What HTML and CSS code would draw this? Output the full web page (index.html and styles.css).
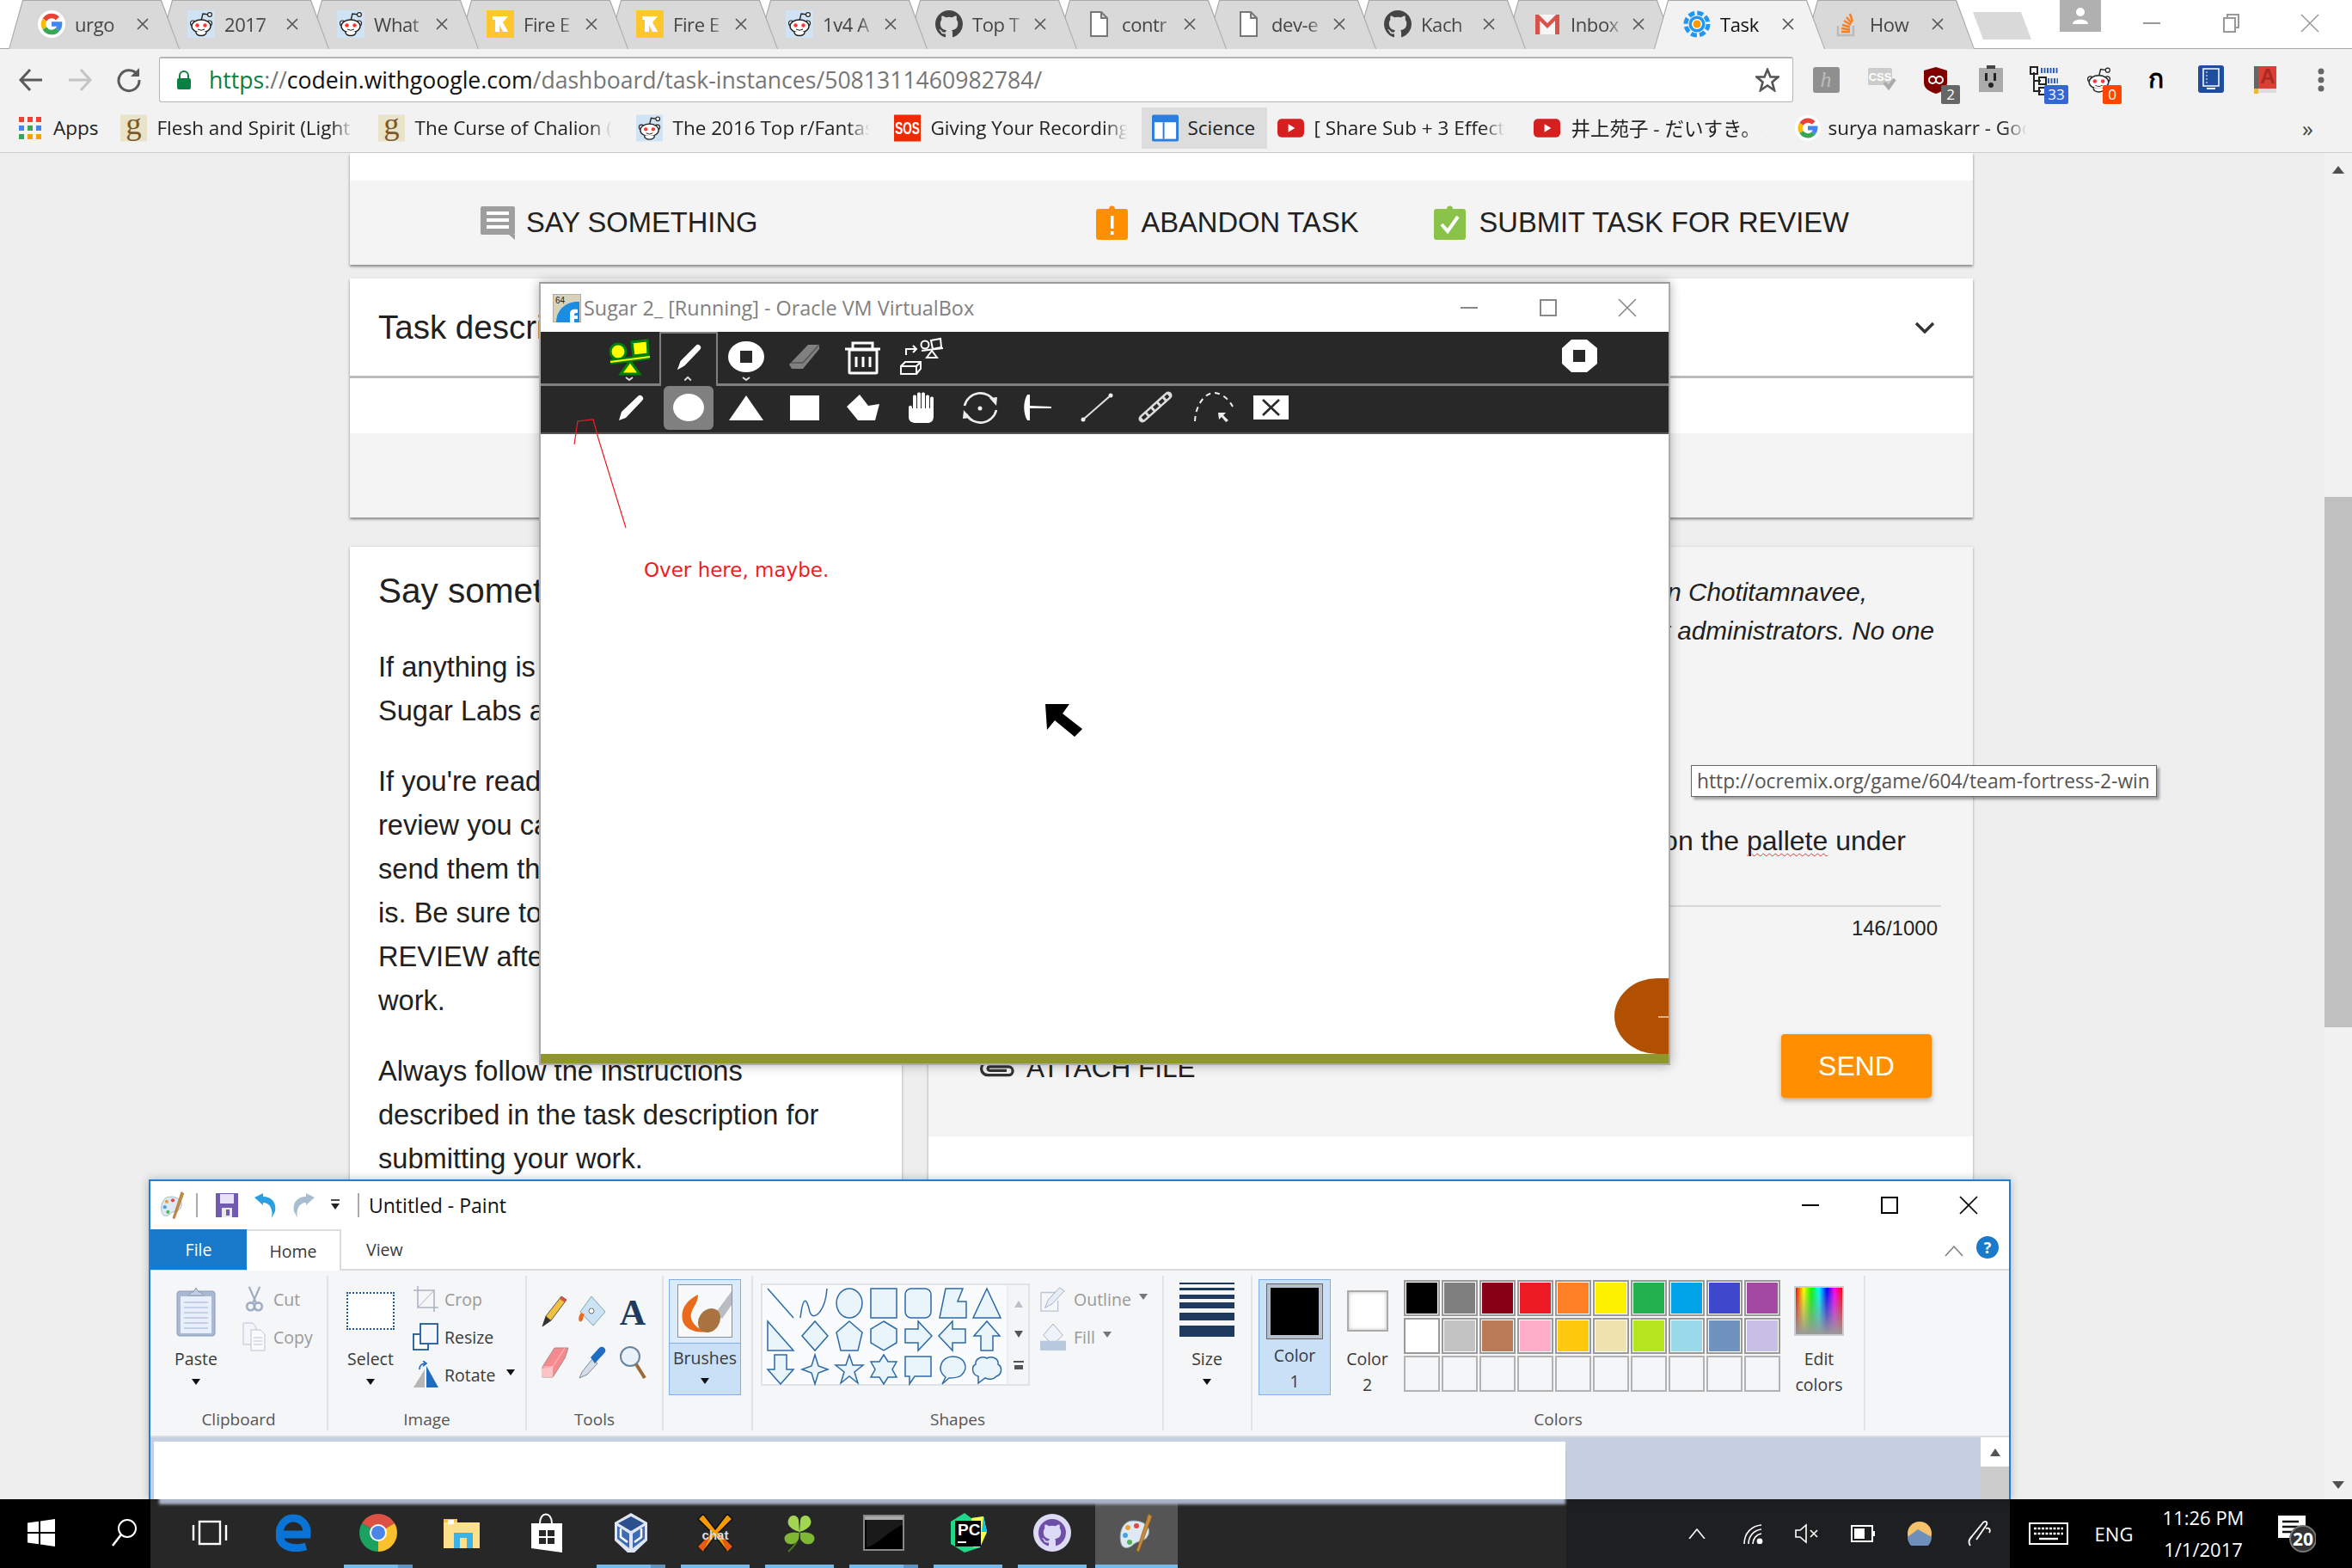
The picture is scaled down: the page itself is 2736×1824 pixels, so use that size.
FILE: index.html
```html
<!DOCTYPE html>
<html lang="en">
<head>
<meta charset="utf-8">
<title>Task - Google Code-in</title>
<link rel="stylesheet" href="styles.css">
</head>
<body>
<svg class="defs" width="0" height="0">
  <symbol id="i-g" viewBox="0 0 32 32">
    <circle cx="16" cy="16" r="16" fill="#fff"/>
    <g fill="none" stroke-width="5.5">
      <path d="M8 11A9.5 9.5 0 0 1 23 9.5" stroke="#ea4335"/>
      <path d="M8 11A9.5 9.5 0 0 0 8 21" stroke="#fbbc05"/>
      <path d="M8 21A9.5 9.5 0 0 0 23 22.5" stroke="#34a853"/>
      <path d="M23 22.5A9.5 9.5 0 0 0 25.5 16H16" stroke="#4285f4"/>
    </g>
  </symbol>
  <symbol id="i-snoo" viewBox="0 0 32 32">
    <path d="M16 12L18 4L25 5" fill="none" stroke="#222" stroke-width="1.4"/>
    <circle cx="26" cy="5" r="2.4" fill="#fff" stroke="#222" stroke-width="1.2"/>
    <circle cx="6.5" cy="15" r="3" fill="#fff" stroke="#222" stroke-width="1.2"/>
    <circle cx="25.5" cy="15" r="3" fill="#fff" stroke="#222" stroke-width="1.2"/>
    <ellipse cx="16" cy="18.5" rx="11" ry="7.5" fill="#fff" stroke="#222" stroke-width="1.4"/>
    <path d="M10 25C9 31 23 31 22 25" fill="#fff" stroke="#222" stroke-width="1.4"/>
    <circle cx="11.5" cy="17.5" r="2.2" fill="#f33"/>
    <circle cx="20.5" cy="17.5" r="2.2" fill="#f33"/>
    <path d="M12 22Q16 24.5 20 22" fill="none" stroke="#222"/>
  </symbol>
  <symbol id="i-reddit" viewBox="0 0 32 32">
    <rect width="32" height="32" fill="#cfe3f5"/>
    <use href="#i-snoo" width="32" height="32"/>
  </symbol>
  <symbol id="i-k" viewBox="0 0 32 32">
    <rect width="32" height="32" fill="#ffc72c"/>
    <path d="M7 7H25L19 14L25 25H19L15 17V25H10V11H7Z" fill="#fff"/>
  </symbol>
  <symbol id="i-gh" viewBox="0 0 16 16">
    <path fill="currentColor" d="M8 0C3.58 0 0 3.58 0 8c0 3.54 2.29 6.53 5.47 7.59.4.07.55-.17.55-.38 0-.19-.01-.82-.01-1.49-2.01.37-2.53-.49-2.69-.94-.09-.23-.48-.94-.82-1.13-.28-.15-.68-.52-.01-.53.63-.01 1.08.58 1.23.82.72 1.21 1.87.87 2.33.66.07-.52.28-.87.51-1.07-1.78-.2-3.64-.89-3.64-3.95 0-.87.31-1.59.82-2.15-.08-.2-.36-1.02.08-2.12 0 0 .67-.21 2.2.82.64-.18 1.32-.27 2-.27.68 0 1.36.09 2 .27 1.53-1.04 2.2-.82 2.2-.82.44 1.1.16 1.92.08 2.12.51.56.82 1.27.82 2.15 0 3.07-1.87 3.75-3.65 3.95.29.25.54.73.54 1.48 0 1.07-.01 1.93-.01 2.2 0 .21.15.46.55.38A8.013 8.013 0 0 0 16 8c0-4.42-3.58-8-8-8z"/>
  </symbol>
  <symbol id="i-doc" viewBox="0 0 32 32">
    <path d="M7 2H19L26 9V30H7Z M19 2V9H26" fill="#fff" stroke="#777" stroke-width="2"/>
  </symbol>
  <symbol id="i-gmail" viewBox="0 0 32 32">
    <rect x="2" y="5" width="28" height="23" fill="#f6f6f6"/>
    <path d="M2 28V5H6L16 15L26 5H30V28H25V12L16 21L7 12V28Z" fill="#d9534a"/>
  </symbol>
  <symbol id="i-gear" viewBox="0 0 32 32">
    <circle cx="16" cy="16" r="13" fill="none" stroke="#2196f3" stroke-width="5" stroke-dasharray="7 3.2"/>
    <circle cx="16" cy="16" r="9.5" fill="#2196f3"/>
    <circle cx="16" cy="16" r="6" fill="#fff"/>
    <circle cx="16" cy="16" r="4.5" fill="#ff9800"/>
  </symbol>
  <symbol id="i-so" viewBox="0 0 32 32">
    <path d="M6 18V29H24V18" fill="none" stroke="#bbb" stroke-width="2.5"/>
    <path d="M10 25H20M10 21L20 22.5M11 17L20 19.5M13 12L21 17M16 8L22 15M20 4L23 13" fill="none" stroke="#f48024" stroke-width="2.5"/>
  </symbol>
  <symbol id="i-yt" viewBox="0 0 32 32">
    <rect y="5" width="32" height="22" rx="5" fill="#d6201f"/>
    <path d="M13 11L21 16L13 21Z" fill="#fff"/>
  </symbol>
  <symbol id="i-gb" viewBox="0 0 32 32">
    <rect width="32" height="32" fill="#e9e3c9"/>
    <text x="16" y="23" class="svg-g">g</text>
  </symbol>
  <symbol id="i-palette" viewBox="0 0 44 48">
    <path d="M18 10C6 10 1 24 4 36C6 44 14 42 18 38C24 32 32 36 36 26C39 16 30 10 18 10Z" fill="#dfe9f3" stroke="#8aa" stroke-width="1"/>
    <circle cx="12" cy="18" r="3" fill="#e8a33d"/>
    <circle cx="22" cy="16" r="3" fill="#e04848"/>
    <circle cx="9" cy="27" r="3" fill="#4aa3df"/>
    <circle cx="14" cy="35" r="3" fill="#57b05c"/>
    <path d="M36 2L40 5L25 46L22 45Z" fill="#c98a3c" stroke="#8a5a20" stroke-width=".7"/>
  </symbol>
</svg>

<div class="screen">
  <header class="chrome">
    <div class="tabstrip">
      <div class="tab"><svg class="fav"><use href="#i-g"/></svg><span class="tab-t">urgo</span><svg class="tab-x" viewBox="0 0 14 14"><path d="M1 1L13 13M13 1L1 13"/></svg></div>
      <div class="tab"><svg class="fav"><use href="#i-reddit"/></svg><span class="tab-t">2017</span><svg class="tab-x" viewBox="0 0 14 14"><path d="M1 1L13 13M13 1L1 13"/></svg></div>
      <div class="tab"><svg class="fav"><use href="#i-reddit"/></svg><span class="tab-t">What</span><svg class="tab-x" viewBox="0 0 14 14"><path d="M1 1L13 13M13 1L1 13"/></svg></div>
      <div class="tab"><svg class="fav"><use href="#i-k"/></svg><span class="tab-t">Fire E</span><svg class="tab-x" viewBox="0 0 14 14"><path d="M1 1L13 13M13 1L1 13"/></svg></div>
      <div class="tab"><svg class="fav"><use href="#i-k"/></svg><span class="tab-t">Fire E</span><svg class="tab-x" viewBox="0 0 14 14"><path d="M1 1L13 13M13 1L1 13"/></svg></div>
      <div class="tab"><svg class="fav"><use href="#i-reddit"/></svg><span class="tab-t">1v4 A</span><svg class="tab-x" viewBox="0 0 14 14"><path d="M1 1L13 13M13 1L1 13"/></svg></div>
      <div class="tab"><svg class="fav gh-dark"><use href="#i-gh"/></svg><span class="tab-t">Top T</span><svg class="tab-x" viewBox="0 0 14 14"><path d="M1 1L13 13M13 1L1 13"/></svg></div>
      <div class="tab"><svg class="fav"><use href="#i-doc"/></svg><span class="tab-t">contr</span><svg class="tab-x" viewBox="0 0 14 14"><path d="M1 1L13 13M13 1L1 13"/></svg></div>
      <div class="tab"><svg class="fav"><use href="#i-doc"/></svg><span class="tab-t">dev-e</span><svg class="tab-x" viewBox="0 0 14 14"><path d="M1 1L13 13M13 1L1 13"/></svg></div>
      <div class="tab"><svg class="fav gh-dark"><use href="#i-gh"/></svg><span class="tab-t">Kach</span><svg class="tab-x" viewBox="0 0 14 14"><path d="M1 1L13 13M13 1L1 13"/></svg></div>
      <div class="tab"><svg class="fav"><use href="#i-gmail"/></svg><span class="tab-t">Inbox</span><svg class="tab-x" viewBox="0 0 14 14"><path d="M1 1L13 13M13 1L1 13"/></svg></div>
      <div class="tab tab-on"><svg class="fav"><use href="#i-gear"/></svg><span class="tab-t">Task</span><svg class="tab-x" viewBox="0 0 14 14"><path d="M1 1L13 13M13 1L1 13"/></svg></div>
      <div class="tab"><svg class="fav"><use href="#i-so"/></svg><span class="tab-t">How</span><svg class="tab-x" viewBox="0 0 14 14"><path d="M1 1L13 13M13 1L1 13"/></svg></div>
      <div class="newtab"></div>
      <div class="profile"><svg width="20" height="22" viewBox="0 0 20 22"><circle cx="10" cy="6" r="5" fill="#fff"/><path d="M1 20C1 13 19 13 19 20Z" fill="#fff"/></svg></div>
      <div class="wctl"><svg width="22" height="22" viewBox="0 0 22 22"><path d="M1 11H21" stroke="#999" stroke-width="2"/></svg></div>
      <div class="wctl"><svg width="22" height="22" viewBox="0 0 22 22"><path d="M7 4V1H20V16H16M3 5H16V21H3Z" fill="none" stroke="#999" stroke-width="2"/></svg></div>
      <div class="wctl"><svg width="22" height="22" viewBox="0 0 22 22"><path d="M1 1L21 21M21 1L1 21" stroke="#999" stroke-width="1.5"/></svg></div>
    </div>
    <div class="toolbar">
      <div class="nav"><svg width="30" height="28" viewBox="0 0 30 28"><path d="M14 2L3 14L14 26M3 14H28" fill="none" stroke="#5a5a5a" stroke-width="3"/></svg></div>
      <div class="nav"><svg width="30" height="28" viewBox="0 0 30 28"><path d="M16 2L27 14L16 26M27 14H2" fill="none" stroke="#c4c4c4" stroke-width="3"/></svg></div>
      <div class="nav"><svg width="30" height="30" viewBox="0 0 30 30"><path d="M25 9A12 12 0 1 0 27 15" fill="none" stroke="#5a5a5a" stroke-width="3"/><path d="M27 1V11H17Z" fill="#5a5a5a"/></svg></div>
      <div class="omni">
        <svg class="lock" width="18" height="22" viewBox="0 0 18 22"><path d="M4 9V6A5 5 0 0 1 14 6V9" fill="none" stroke="#0b8043" stroke-width="2"/><rect x="1" y="9" width="16" height="13" rx="2" fill="#0b8043"/></svg>
        <span class="url"><span class="u-sec">https</span><span class="u-rest">://</span><span class="u-host">codein.withgoogle.com</span><span class="u-rest">/dashboard/task-instances/5081311460982784/</span></span>
        <svg class="star" width="28" height="28" viewBox="0 0 28 28"><path d="M14 2L17.5 10.5H26.5L19.5 16.5L22 26L14 20.5L6 26L8.5 16.5L1.5 10.5H10.5Z" fill="none" stroke="#555" stroke-width="2.6"/></svg>
      </div>
      <div class="ext"><svg viewBox="0 0 64 52"><rect x="17" y="12" width="31" height="30" rx="3" fill="#8f8f8f"/><text x="32" y="35" class="svg-h">h</text></svg></div>
      <div class="ext"><svg viewBox="0 0 64 52"><rect x="17" y="13" width="28" height="20" rx="2" fill="#ccc"/><text x="31" y="28" class="svg-css">CSS</text><path d="M36 30L41 36L48 26" fill="none" stroke="#aaa" stroke-width="4"/></svg></div>
      <div class="ext"><svg viewBox="0 0 64 52"><path d="M18 16L32 12L45 16V30C45 38 38 41 32 43C26 41 18 38 18 30Z" fill="#800000"/><circle cx="28" cy="27" r="4" fill="none" stroke="#fff" stroke-width="2"/><circle cx="36" cy="27" r="4" fill="none" stroke="#fff" stroke-width="2"/><rect x="38" y="33" width="22" height="22" rx="2" fill="#666"/><text x="49" y="50" class="svg-badge">2</text></svg></div>
      <div class="ext"><svg viewBox="0 0 64 52"><rect x="18" y="13" width="28" height="28" fill="#aaa"/><rect x="27" y="10" width="10" height="4" fill="#444"/><rect x="25" y="19" width="3" height="9" fill="#222"/><rect x="35" y="19" width="3" height="9" fill="#222"/><circle cx="32" cy="33" r="3" fill="#222"/></svg></div>
      <div class="ext"><svg viewBox="0 0 64 52"><path d="M18 18V40H26M18 28H26" fill="none" stroke="#222" stroke-width="2"/><rect x="14" y="12" width="8" height="8" fill="none" stroke="#222" stroke-width="2"/><rect x="24" y="24" width="8" height="8" fill="none" stroke="#222" stroke-width="2"/><rect x="24" y="36" width="8" height="8" fill="none" stroke="#222" stroke-width="2"/><path d="M26 16H46M34 28H46" stroke="#2b5fc0" stroke-width="6" stroke-dasharray="2 1.5"/><rect x="30" y="33" width="28" height="22" rx="2" fill="#3367d6"/><text x="44" y="50" class="svg-badge">33</text></svg></div>
      <div class="ext"><svg viewBox="0 0 64 52"><use href="#i-snoo" x="13" y="10" width="33" height="34"/><rect x="34" y="33" width="22" height="22" rx="2" fill="#ff4500"/><text x="45" y="50" class="svg-badge">0</text></svg></div>
      <div class="ext"><svg viewBox="0 0 64 52"><text x="32" y="36" class="svg-thai">ก</text></svg></div>
      <div class="ext"><svg viewBox="0 0 64 52"><rect x="17" y="10" width="30" height="32" rx="3" fill="#1e4e9c"/><rect x="23" y="14" width="18" height="20" fill="none" stroke="#fff" stroke-width="1.5"/><path d="M27 17V31" stroke="#fff" stroke-dasharray="2 2"/><path d="M27 37H37" stroke="#fff" stroke-width="2"/></svg></div>
      <div class="ext"><svg viewBox="0 0 64 52"><rect x="18" y="11" width="26" height="26" fill="#db3e32"/><rect x="18" y="11" width="5" height="32" fill="#666"/><rect x="23" y="37" width="21" height="5" fill="#ddd"/><rect x="18" y="37" width="5" height="6" fill="#e8b93a"/><text x="34" y="31" class="svg-a">A</text></svg></div>
      <div class="ext"><svg viewBox="0 0 64 52"><circle cx="32" cy="17" r="3.5" fill="#666"/><circle cx="32" cy="27" r="3.5" fill="#666"/><circle cx="32" cy="37" r="3.5" fill="#666"/></svg></div>
    </div>
    <nav class="bookmarks">
      <div class="bm bm-apps"><svg width="26" height="26" viewBox="0 0 26 26"><path d="M0 0h6v6H0zM10 0h6v6h-6zM20 0h6v6h-6z" fill="#ea4335"/><path d="M0 10h6v6H0zM20 10h6v6h-6z" fill="#4285f4"/><path d="M10 10h6v6h-6z" fill="#34a853"/><path d="M0 20h6v6H0z" fill="#34a853"/><path d="M10 20h6v6h-6zM20 20h6v6h-6z" fill="#f4a20b"/></svg><span>Apps</span></div>
      <div class="bm"><svg class="bi"><use href="#i-gb"/></svg><span class="bm-t">Flesh and Spirit (Light</span></div>
      <div class="bm"><svg class="bi"><use href="#i-gb"/></svg><span class="bm-t">The Curse of Chalion (</span></div>
      <div class="bm"><svg class="bi"><use href="#i-reddit"/></svg><span class="bm-t">The 2016 Top r/Fantas</span></div>
      <div class="bm bm-sos"><svg class="bi" viewBox="0 0 32 32"><rect width="32" height="32" fill="#f02a00"/><text x="16" y="15" class="svg-sos">SOS</text></svg><span class="bm-t">Giving Your Recording</span></div>
      <div class="bm bm-sci"><svg class="bi" viewBox="0 0 32 32"><rect width="32" height="32" rx="2" fill="#2a7de1"/><rect x="3" y="9" width="26" height="20" fill="#fff"/><rect x="13" y="9" width="2" height="20" fill="#2a7de1"/></svg><span>Science</span></div>
      <div class="bm bm-yt"><svg class="bi"><use href="#i-yt"/></svg><span class="bm-t">[ Share Sub + 3 Effect</span></div>
      <div class="bm bm-yt2"><svg class="bi"><use href="#i-yt"/></svg><span class="bm-t">井上苑子 - だいすき。-</span></div>
      <div class="bm bm-gg"><svg class="bi bi-g"><use href="#i-g"/></svg><span class="bm-t">surya namaskarr - Goo</span></div>
      <div class="bm-more">»</div>
    </nav>
  </header>

  <div class="viewport">
    <main class="page">
      <section class="card card-actions">
        <div class="actions">
          <div class="act act-say">
            <svg width="42" height="40" viewBox="0 0 42 40"><path d="M3 1H39A2 2 0 0 1 41 3V32A2 2 0 0 1 39 34H41V40L34 34H3A2 2 0 0 1 1 32V3A2 2 0 0 1 3 1Z" fill="#9e9e9e"/><path d="M8 9H34M8 17H34M8 25H34" stroke="#fff" stroke-width="4"/></svg>
            <span>SAY SOMETHING</span>
          </div>
          <div class="act act-abandon">
            <svg width="37" height="40" viewBox="0 0 37 40"><path d="M15 4A3 3 0 0 1 22 4H34A3 3 0 0 1 37 7V37A3 3 0 0 1 34 40H3A3 3 0 0 1 0 37V7A3 3 0 0 1 3 4Z" fill="#ff8f00"/><rect x="17" y="12" width="3.5" height="15" fill="#fff"/><rect x="17" y="30" width="3.5" height="4" fill="#fff"/></svg>
            <span>ABANDON TASK</span>
          </div>
          <div class="act act-submit">
            <svg width="37" height="40" viewBox="0 0 37 40"><path d="M15 4A3 3 0 0 1 22 4H34A3 3 0 0 1 37 7V37A3 3 0 0 1 34 40H3A3 3 0 0 1 0 37V7A3 3 0 0 1 3 4Z" fill="#8bc34a"/><path d="M9 22L16 30L28 13" fill="none" stroke="#fff" stroke-width="4"/></svg>
            <span>SUBMIT TASK FOR REVIEW</span>
          </div>
        </div>
      </section>

      <section class="card card-task">
        <div class="task-head">
          <h2 class="h-title h-task">Task description</h2>
          <svg width="24" height="14" viewBox="0 0 24 14"><path d="M2 2L12 12L22 2" fill="none" stroke="#333" stroke-width="3.4"/></svg>
        </div>
        <div class="task-gap"></div>
        <div class="task-foot"></div>
      </section>

      <section class="columns">
        <div class="col-left">
          <h2 class="h-title h-say">Say something</h2>
          <p class="para para-1">If anything is<br>Sugar Labs admins</p>
          <p class="para">If you're ready<br>review you can<br>send them the<br>is. Be sure to<br>REVIEW after<br>work.</p>
          <p class="para">Always follow the instructions<br>described in the task description for<br>submitting your work.</p>
        </div>
        <div class="col-right">
          <div class="panel">
            <p class="note note-a">Sampan Chotitamnavee,</p>
            <p class="note note-b">project administrators. No one</p>
            <p class="typed">on the <span class="spell">pallete</span> under</p>
            <div class="rule"></div>
            <div class="counter">146/1000</div>
            <div class="send-row">
              <div class="attach">
                <svg width="46" height="24" viewBox="0 0 42 22"><path d="M40 5H12A7 7 0 0 0 12 19H34A4.5 4.5 0 0 0 34 10H14A2 2 0 0 0 14 14H32" fill="none" stroke="#333" stroke-width="3"/></svg>
                <span>ATTACH FILE</span>
              </div>
              <div class="send">SEND</div>
            </div>
          </div>
        </div>
      </section>
    </main>
    <aside class="scroll">
      <div class="arrow-up"></div>
      <div class="thumb"></div>
      <div class="arrow-down"></div>
    </aside>
  </div>

  <footer class="taskbar">
    <div class="tb tb-start"><svg width="32" height="32" viewBox="0 0 32 32" fill="#fff"><path d="M0 4.5L13 2.7V15H0ZM15 2.4L32 0V15H15ZM0 17H13V29.3L0 27.5ZM15 17H32V32L15 29.6Z"/></svg></div>
    <div class="tb"><svg width="34" height="36" viewBox="0 0 34 36"><circle cx="20" cy="13" r="10" fill="none" stroke="#fff" stroke-width="2"/><path d="M13 20L3 33" stroke="#fff" stroke-width="2.5"/></svg></div>
    <div class="tb"><svg width="42" height="30" viewBox="0 0 42 30"><rect x="9" y="2" width="24" height="26" fill="none" stroke="#fff" stroke-width="2.4"/><path d="M2 6V24M40 6V24" stroke="#fff" stroke-width="2.4"/></svg></div>
    <div class="tb"><svg width="42" height="44" viewBox="0 0 42 44"><path d="M6 24H36C37 12 29 5 20 5C10 5 3 15 4 26C5 36 16 43 35 38" fill="none" stroke="#0a74d6" stroke-width="9"/></svg></div>
    <div class="tb tb-stack"><svg width="44" height="44" viewBox="0 0 44 44"><path d="M22 22L3 11A22 22 0 0 1 41 11Z" fill="#dd5044"/><path d="M22 22L41 11A22 22 0 0 1 22 44Z" fill="#fbc02d"/><path d="M22 22L22 44A22 22 0 0 1 3 11Z" fill="#1ba160"/><circle cx="22" cy="22" r="10" fill="#fff"/><circle cx="22" cy="22" r="8" fill="#4a86e8"/></svg></div>
    <div class="tb"><svg width="44" height="36" viewBox="0 0 44 36"><path d="M0 2H16V8H0Z" fill="#f2c14e"/><rect x="0" y="6" width="42" height="30" fill="#ffe08a"/><path d="M5 3H12V8H5Z" fill="#fff"/><path d="M12 18H34V36H27V24H19V36H12Z" fill="#3ab4e8"/></svg></div>
    <div class="tb"><svg width="44" height="46" viewBox="0 0 44 46"><path d="M14 12C14 -2 28 -2 28 12" fill="none" stroke="#fff" stroke-width="2"/><path d="M4 12H40V46L4 41Z" fill="#fff"/><path d="M13 20H21V27H13ZM23 20H31V27H23ZM13 29H21V36H13ZM23 29H31V36H23Z" fill="#272727"/></svg></div>
    <div class="tb tb-stack"><svg width="40" height="46" viewBox="0 0 40 46"><path d="M20 0L39 11V32L24 46H16L1 32V11Z" fill="#dfe6f2"/><path d="M20 4L35 12L20 21L5 12Z" fill="#2b4f8f"/><path d="M4 15L18 24V41L4 30ZM36 15L22 24V41L36 30Z" fill="#3e6cb4"/><path d="M8 18V28L16 34M32 18V28L24 34" fill="none" stroke="#fff" stroke-width="2.5"/></svg></div>
    <div class="tb tb-open"><svg width="44" height="44" viewBox="0 0 44 44"><path d="M8 0L22 18L36 0L42 6L26 22L42 38L36 44L22 26L8 44L2 38L18 22L2 6Z" fill="#f59a00" stroke="#111" stroke-width="1.5"/><path d="M18 22L8 44L2 38ZM26 22L36 44L42 38Z" fill="#e85a10"/><text x="22" y="30" class="svg-chat">chat</text></svg></div>
    <div class="tb tb-open"><svg width="44" height="46" viewBox="0 0 44 46"><path d="M22 22C21 32 15 40 9 45" fill="none" stroke="#4c7d1a" stroke-width="2"/><path d="M22 22C14 20 5 14 10 6C13 1 20 3 21 8Z" fill="#a3d555"/><path d="M22 22C30 20 39 14 34 6C31 1 24 3 23 8Z" fill="#a3d555"/><path d="M21 23C12 21 2 25 5 32C8 39 18 37 21 30Z" fill="#7fb835"/><path d="M23 23C32 21 42 25 39 32C36 39 26 37 23 30Z" fill="#7fb835"/></svg></div>
    <div class="tb tb-stack"><svg width="48" height="42" viewBox="0 0 48 42"><rect x="1" y="1" width="46" height="40" fill="#000" stroke="#888" stroke-width="2"/><rect x="2" y="2" width="44" height="4" fill="#aaa"/><path d="M4 38C16 36 30 18 46 12V6H4Z" fill="#1a1a1a"/></svg></div>
    <div class="tb tb-open"><svg width="48" height="46" viewBox="0 0 48 46"><path d="M4 10L20 0L28 6L42 4L46 22L38 40L20 46L4 36Z" fill="#21d789"/><path d="M28 6L42 4L46 22L38 40L30 40Z" fill="#fcf84a"/><path d="M42 4L46 22L40 22Z" fill="#07c3f2"/><rect x="9" y="9" width="30" height="30" fill="#000"/><text x="12" y="26" class="svg-pc">PC</text><rect x="12" y="33" width="10" height="2" fill="#fff"/></svg></div>
    <div class="tb tb-open"><svg width="44" height="44" viewBox="0 0 44 44"><circle cx="22" cy="22" r="22" fill="#dcdaf4"/><use href="#i-gh" class="gh-purple" x="6" y="6" width="32" height="32"/></svg></div>
    <div class="tb tb-paint"><svg width="44" height="48"><use href="#i-palette"/></svg></div>
    <div class="tray">
      <div class="tr tr-1"><svg width="20" height="12" viewBox="0 0 20 12"><path d="M1 12L10 1L19 12" fill="none" stroke="#fff" stroke-width="1.6"/></svg></div>
      <div class="tr tr-2"><svg width="24" height="24" viewBox="0 0 24 24" fill="none" stroke="#fff" stroke-width="1.6"><path d="M2 24C2 12 10 3 22 2M7 24C7 15 13 8 22 7M12 24C12 18 16 13 22 12"/><circle cx="20" cy="21" r="2.6" fill="#fff"/></svg></div>
      <div class="tr tr-3"><svg width="28" height="24" viewBox="0 0 28 24" fill="none" stroke="#fff" stroke-width="1.6"><path d="M1 8H6L13 2V22L6 16H1Z"/><path d="M18 8L26 16M26 8L18 16"/></svg></div>
      <div class="tr tr-4"><svg width="28" height="20" viewBox="0 0 28 20"><rect x="1" y="1" width="24" height="18" fill="none" stroke="#fff" stroke-width="2"/><rect x="4" y="4" width="12" height="12" fill="#fff"/><rect x="26" y="7" width="2" height="6" fill="#fff"/></svg></div>
      <div class="tr tr-5"><svg width="28" height="28" viewBox="0 0 28 28"><circle cx="14" cy="14" r="14" fill="#f5c26b"/><path d="M0 18L12 9L28 18A14 14 0 0 1 0 18Z" fill="#6f8fbb"/></svg></div>
      <div class="tr tr-6"><svg width="30" height="32" viewBox="0 0 30 32" fill="none" stroke="#fff" stroke-width="1.8"><path d="M4 30C1 26 3 22 6 19L19 3C22 0 25 3 22 7L11 23"/><path d="M22 10C26 9 28 11 26 15"/></svg></div>
      <div class="tr tr-7"><svg width="46" height="26" viewBox="0 0 46 26"><rect x="1" y="1" width="44" height="24" fill="none" stroke="#fff" stroke-width="2"/><path d="M6 7H40M6 13H40" stroke="#fff" stroke-width="2.4" stroke-dasharray="3 1.5"/><path d="M12 19H34" stroke="#fff" stroke-width="2.4"/></svg></div>
      <div class="tr tr-8">ENG</div>
      <div class="tr tr-9"><span>11:26 PM</span><span>1/1/2017</span></div>
      <div class="tr tr-10"><svg width="50" height="50" viewBox="0 0 50 50"><path d="M6 4H38V30H6Z" fill="#fff"/><path d="M11 11H30M11 17H30M11 23H26" stroke="#111" stroke-width="2.4"/><circle cx="35" cy="31" r="15" fill="#333" stroke="#777" stroke-width="2"/><text x="35" y="39" class="svg-notif">20</text></svg></div>
    </div>
  </footer>

  <section class="vm">
    <div class="vm-title">
      <svg width="33" height="33" viewBox="0 0 33 33"><rect width="33" height="33" fill="#d8d2bc" stroke="#888"/><text x="3" y="11" class="svg-64">64</text><path d="M4 33C4 18 16 8 31 9V33Z" fill="#1a8de0"/><path d="M20 33V23C20 18 24 17 29 18V22C25 22 25 23 25 25H29V29H25V33Z" fill="#fff"/></svg>
      <span class="vm-name">Sugar 2_ [Running] - Oracle VM VirtualBox</span>
      <div class="vm-ctl">
        <svg width="22" height="22" viewBox="0 0 22 22"><path d="M1 11H21" stroke="#888" stroke-width="2"/></svg>
        <svg width="22" height="22" viewBox="0 0 22 22"><rect x="2" y="2" width="18" height="18" fill="none" stroke="#888" stroke-width="2"/></svg>
        <svg width="22" height="22" viewBox="0 0 22 22"><path d="M1 1L21 21M21 1L1 21" stroke="#888" stroke-width="1.6"/></svg>
      </div>
    </div>
    <div class="sugar-row sugar-top">
      <svg class="slot" viewBox="0 0 68 60"><path d="M34 34L45 49H23Z" fill="#ff0" stroke="#008009" stroke-width="3"/><circle cx="20" cy="23" r="9" fill="#ff0" stroke="#008009" stroke-width="3"/><path d="M36 12L54 10L55 26L38 28Z" fill="#ff0" stroke="#008009" stroke-width="3"/><path d="M11 35L57 29" stroke="#008009" stroke-width="6"/><path d="M11 35L57 29" stroke="#ff0" stroke-width="2"/><path d="M29 53L33 56L37 53" fill="none" stroke="#ddd" stroke-width="2"/></svg>
      <svg class="slot slot-on" viewBox="0 0 68 63"><path d="M20 44L24 33L43 14A2.5 2.5 0 0 1 48 19L29 39Z" fill="#fff"/><path d="M29 57L33 53L37 57" fill="none" stroke="#ddd" stroke-width="2"/></svg>
      <svg class="slot" viewBox="0 0 68 60"><ellipse cx="33" cy="29" rx="21" ry="18" fill="#fff"/><rect x="26" y="22" width="14" height="14" fill="#282828"/><path d="M29 53L33 56L37 53" fill="none" stroke="#ddd" stroke-width="2"/></svg>
      <svg class="slot" viewBox="0 0 68 60"><path d="M15 38L37 15H50V20L31 43H18Z" fill="#808080"/><path d="M17 36H31L50 15" fill="none" stroke="#555" stroke-width="1.4"/></svg>
      <svg class="slot" viewBox="0 0 68 60"><path d="M12 20H53M21 19V13H44V19" fill="none" stroke="#fff" stroke-width="3"/><rect x="17" y="21" width="32" height="27" rx="1" fill="none" stroke="#fff" stroke-width="3"/><path d="M25 29V41M33 29V41M41 29V41" stroke="#fff" stroke-width="3"/></svg>
      <svg class="slot" viewBox="0 0 68 60" fill="none" stroke="#fff" stroke-width="2"><path d="M15 27V20H27M23 16L27 20L23 24"/><circle cx="37" cy="15" r="4.5"/><path d="M44 10L55 8L56 18L46 20Z"/><path d="M33 22L58 19"/><path d="M45 22L39 30H51Z"/><path d="M9 40H27V49H9ZM9 40L14 35H32V43L27 49M27 40L32 35"/></svg>
      <svg class="slot slot-end" viewBox="0 0 68 60"><path d="M24 9H42L54 19V37L42 47H24L13 37V19Z" fill="#fff"/><rect x="26" y="21" width="14" height="14" fill="#282828"/></svg>
    </div>
    <div class="sugar-row sugar-bottom">
      <svg class="slot2" viewBox="0 0 68 54"><path d="M21 40L24 30L43 12A2.5 2.5 0 0 1 48 17L29 37Z" fill="#fff"/></svg>
      <div class="slot2 slot2-on"><svg class="slot2" viewBox="0 0 68 54"><ellipse cx="34" cy="25" rx="18" ry="16" fill="#fff"/></svg></div>
      <svg class="slot2" viewBox="0 0 68 54"><path d="M33 11L53 40H13Z" fill="#fff"/></svg>
      <svg class="slot2" viewBox="0 0 68 54"><rect x="16" y="11" width="34" height="29" fill="#fff"/></svg>
      <svg class="slot2" viewBox="0 0 68 54"><path d="M29 10L14 24L27 40H47L52 21L39 23Z" fill="#fff"/></svg>
      <svg class="slot2" viewBox="0 0 68 54"><path d="M18 25C18 22 22 22 22 25V26H23V12C23 10 27 10 27 12V26H28V9C28 7 32 7 32 9V26H33V9C33 7 37 7 37 9V26H38V12C38 10 42 10 42 12V26H43V14C43 12 47 12 47 14V35C47 41 44 43 40 43H26C22 43 18 41 18 36Z" fill="#fff"/></svg>
      <svg class="slot2" viewBox="0 0 68 54" fill="none" stroke="#eee" stroke-width="2.6"><path d="M15 23A19 19 0 0 1 50 18M52 28A19 19 0 0 1 17 33"/><path d="M44 14L53 13L52 23Z" fill="#eee" stroke="none"/><path d="M22 37L13 38L14 28Z" fill="#eee" stroke="none"/><circle cx="33" cy="26" r="2.5" fill="#eee" stroke="none"/></svg>
      <svg class="slot2" viewBox="0 0 68 54"><path d="M20 10C15 18 15 32 20 40H23V26H48V24L23 23V10Z" fill="#fff"/></svg>
      <svg class="slot2" viewBox="0 0 68 54"><path d="M17 39L49 11" stroke="#e6e6e6" stroke-width="2"/><circle cx="17" cy="39" r="2.5" fill="#eee"/><circle cx="49" cy="11" r="2.5" fill="#eee"/></svg>
      <svg class="slot2" viewBox="0 0 68 54"><path d="M18 38L48 11" stroke="#ddd" stroke-width="9" stroke-dasharray="8 1" stroke-linecap="round"/><path d="M18 38L48 11" stroke="#282828" stroke-width="4" stroke-dasharray="6 3"/></svg>
      <svg class="slot2" viewBox="0 0 68 54"><path d="M11 41C12 20 24 8 33 8C42 8 50 15 55 24" fill="none" stroke="#eee" stroke-width="2" stroke-dasharray="6 5"/><path d="M38 31H47L44 34L50 40L47 42L42 36L39 39Z" fill="#eee"/></svg>
      <svg class="slot2" viewBox="0 0 68 54"><rect x="11" y="11" width="41" height="28" fill="#fff"/><path d="M22 16L41 34M41 16L22 34" stroke="#282828" stroke-width="2.6"/></svg>
    </div>
    <div class="vm-canvas">
      <svg class="scribble" width="80" height="140" viewBox="0 0 80 140"><path d="M2 33L6 6L24 4L30 26L62 130" fill="none" stroke="#ed1c24" stroke-width="1.2"/></svg>
      <span class="over-here">Over here, maybe.</span>
      <svg class="cursor" width="46" height="42" viewBox="0 0 46 42"><path d="M2 3H30L22 14L45 32L36 41L13 22L4 33Z" fill="#000"/></svg>
      <div class="blob"></div>
    </div>
    <div class="vm-bar"></div>
  </section>

  <div class="tooltip">http://ocremix.org/game/604/team-fortress-2-win</div>

  <section class="paint">
    <div class="p-title">
      <svg class="p-logo" width="34" height="34" viewBox="0 0 44 48"><use href="#i-palette"/></svg>
      <i class="p-sep"></i>
      <svg class="p-save" width="26" height="28" viewBox="0 0 26 28"><rect width="26" height="28" fill="#6f5bb0"/><rect x="5" y="1" width="16" height="11" fill="#e7e2f5"/><rect x="7" y="17" width="12" height="11" fill="#e9e9e9"/><rect x="12" y="19" width="4" height="7" fill="#6f5bb0"/></svg>
      <svg width="28" height="30" viewBox="0 0 28 30"><path d="M2 6L12 1V5C22 5 28 12 26 22L22 30C24 20 20 12 12 12V15Z" fill="#2a9fe2"/></svg>
      <svg width="28" height="30" viewBox="0 0 28 30"><path d="M26 6L16 1V5C6 5 0 12 2 22L6 30C4 20 8 12 16 12V15Z" fill="#a9bdd1"/></svg>
      <svg class="p-qa" width="12" height="14" viewBox="0 0 12 14"><path d="M1 1H11" stroke="#222" stroke-width="1.6"/><path d="M1 5H11L6 12Z" fill="#222"/></svg>
      <i class="p-sep p-sep2"></i>
      <span class="p-name">Untitled - Paint</span>
      <div class="p-ctl">
        <svg width="22" height="22" viewBox="0 0 22 22"><path d="M1 11H21" stroke="#000" stroke-width="2"/></svg>
        <svg width="22" height="22" viewBox="0 0 22 22"><rect x="2" y="2" width="18" height="18" fill="none" stroke="#000" stroke-width="2"/></svg>
        <svg width="22" height="22" viewBox="0 0 22 22"><path d="M1 1L21 21M21 1L1 21" stroke="#000" stroke-width="1.6"/></svg>
      </div>
    </div>
    <div class="p-tabs">
      <div class="p-file">File</div>
      <div class="p-home">Home</div>
      <div class="p-view">View</div>
      <svg class="p-collapse" width="24" height="14" viewBox="0 0 24 14"><path d="M2 13L12 2L22 13" fill="none" stroke="#888" stroke-width="1.8"/></svg>
      <div class="p-help">?</div>
    </div>
    <div class="ribbon">
      <div class="grp g-clip">
        <div class="grp-body">
          <div class="big big-paste">
            <div class="big-ico"><svg width="46" height="60" viewBox="0 0 46 60"><rect x="1" y="7" width="44" height="52" rx="3" fill="#a9b9d4" stroke="#8c9cb9"/><rect x="5" y="13" width="36" height="43" fill="#e8eefa"/><path d="M9 20H37M9 26H37M9 32H37M9 38H37M9 44H37M9 50H37" stroke="#b9c8e4" stroke-width="1.4"/><path d="M14 12L18 8H20L23 3L26 8H28L32 12Z" fill="#c4cede" stroke="#8c9cb9"/></svg></div>
            <div class="big-label">Paste</div>
            <div class="caret"></div>
          </div>
          <div class="rows">
            <div class="row off"><svg width="30" height="30" viewBox="0 0 24 34"><path d="M5 1L14 22M19 1L10 22" stroke="#9fadc2" stroke-width="2.5"/><circle cx="7" cy="27" r="5" fill="none" stroke="#9fadc2" stroke-width="3"/><circle cx="17" cy="27" r="5" fill="none" stroke="#9fadc2" stroke-width="3"/></svg><span>Cut</span></div>
            <div class="row off"><svg width="30" height="34" viewBox="0 0 28 34"><path d="M1 1H12L16 6V26H1Z" fill="#f2f5fa" stroke="#bac4d4"/><path d="M10 9H21L26 14V33H10Z" fill="#f8fafd" stroke="#bac4d4"/><path d="M13 18H23M13 22H23M13 26H23" stroke="#bac4d4"/></svg><span>Copy</span></div>
          </div>
        </div>
        <div class="grp-label">Clipboard</div>
      </div>
      <div class="grp g-image">
        <div class="grp-body">
          <div class="big big-select">
            <div class="big-ico"><div class="marquee"></div></div>
            <div class="big-label">Select</div>
            <div class="caret"></div>
          </div>
          <div class="rows">
            <div class="row off"><svg width="30" height="32" viewBox="0 0 30 32"><path d="M6 1V26H30M1 6H25V31" fill="none" stroke="#aab3c2" stroke-width="1.6"/><path d="M6 26L25 6" stroke="#aab3c2"/></svg><span>Crop</span></div>
            <div class="row"><svg width="30" height="32" viewBox="0 0 30 32"><rect x="1" y="13" width="17" height="18" fill="#fff" stroke="#1e5a9a" stroke-width="1.8"/><rect x="9" y="1" width="20" height="23" fill="#f4f8fc" stroke="#1e5a9a" stroke-width="1.8"/></svg><span>Resize</span></div>
            <div class="row"><svg width="30" height="32" viewBox="0 0 30 32"><path d="M1 31L14 10V31Z" fill="#b6b6b6"/><path d="M16 6L30 31H16Z" fill="#1f6cc0"/><path d="M8 10C8 5 11 3 15 3M12 0L16 3L12 6" fill="none" stroke="#1f6cc0" stroke-width="1.6"/></svg><span>Rotate</span><i class="caret caret-in"></i></div>
          </div>
        </div>
        <div class="grp-label">Image</div>
      </div>
      <div class="grp g-tools">
        <div class="grp-body">
          <div class="tools">
            <svg width="32" height="40" viewBox="0 0 32 40"><path d="M2 38L6 26L24 3L30 7L12 31Z" fill="#f0c040" stroke="#555"/><path d="M24 3L30 7L28 10L22 6Z" fill="#d9534a"/><path d="M2 38L6 26L12 31Z" fill="#333"/></svg>
            <svg width="34" height="36" viewBox="0 0 34 36"><path d="M16 1L32 19L18 35L3 19Z" fill="#cde2f4" stroke="#7aa"/><path d="M4 20C-2 28 3 34 6 28C7 26 6 24 8 22Z" fill="#ea6a1c"/><circle cx="16" cy="18" r="3" fill="#fff" stroke="#777"/></svg>
            <svg width="32" height="40" viewBox="0 0 32 40"><text x="16" y="36" class="svg-pa">A</text></svg>
            <svg width="36" height="38" viewBox="0 0 36 38"><path d="M4 24L18 2H34L30 14L16 36H4Z" fill="#f58a8f" stroke="#a88"/><path d="M4 24H16L30 2" fill="none" stroke="#fbc5c7"/><path d="M2 26L4 36H16L16 24Z" fill="#ffd2d3" opacity=".8"/></svg>
            <svg width="32" height="38" viewBox="0 0 32 38"><path d="M1 37L4 30L16 15L22 20L10 33Z" fill="#d5dee8" stroke="#7a8a9a"/><path d="M14 13L24 2A4 4 0 0 1 30 8L19 20Z" fill="#1f6cc0"/></svg>
            <svg width="32" height="40" viewBox="0 0 32 40"><circle cx="13" cy="13" r="11" fill="#e8f2fb" stroke="#6a84a0" stroke-width="2"/><path d="M20 22L30 38" stroke="#9a6a3a" stroke-width="4"/></svg>
          </div>
        </div>
        <div class="grp-label">Tools</div>
      </div>
      <div class="grp g-brush">
        <div class="hl-btn">
          <div class="hl-top">
            <svg width="64" height="62" viewBox="0 0 64 62"><rect x=".5" y=".5" width="63" height="61" fill="#f7f8fa" stroke="#8a8f96"/><path d="M63 8L44 34L52 40L63 24Z" fill="#b9bdc2"/><path d="M24 12C12 18 3 28 6 42C9 54 26 58 36 54C24 54 14 44 16 34C18 26 24 22 24 12Z" fill="#ea6a1c"/><ellipse cx="37" cy="42" rx="12" ry="15" transform="rotate(35 37 42)" fill="#a8733f"/></svg>
          </div>
          <div class="big-label">Brushes</div>
          <div class="caret"></div>
        </div>
      </div>
      <div class="grp g-shapes">
        <div class="grp-body">
          <div class="gallery">
            <svg width="284" height="117" viewBox="0 0 284 117" class="shapes">
              <g transform="translate(21,21)"><path class="ns" d="M-15 -17L15 17"/></g>
              <g transform="translate(61,21)"><path class="ns" d="M-17 17C-14 -8 -10 -8 -6 10C-2 22 12 10 14 -17"/></g>
              <g transform="translate(101,21)"><ellipse rx="15" ry="17"/></g>
              <g transform="translate(141,21)"><rect x="-15" y="-17" width="30" height="34"/></g>
              <g transform="translate(181,21)"><rect x="-15" y="-17" width="30" height="34" rx="7"/></g>
              <g transform="translate(221,21)"><path d="M-15 17L-8 -17H12L6 -2H16V17Z"/></g>
              <g transform="translate(261,21)"><path d="M0 -17L16 17H-16Z"/></g>
              <g transform="translate(21,59)"><path d="M-15 -17L15 17H-15Z"/></g>
              <g transform="translate(61,59)"><path d="M0 -17L15 0L0 17L-15 0Z"/></g>
              <g transform="translate(101,59)"><path d="M0 -17L15 -4L10 17H-10L-15 -4Z"/></g>
              <g transform="translate(141,59)"><path d="M0 -17L15 -8V8L0 17L-15 8V-8Z"/></g>
              <g transform="translate(181,59)"><path d="M-15 -8H0V-17L16 0L0 17V8H-15Z"/></g>
              <g transform="translate(221,59)"><path d="M15 -8H0V-17L-16 0L0 17V8H15Z"/></g>
              <g transform="translate(261,59)"><path d="M0 -17L15 0H7V17H-7V0H-15Z"/></g>
              <g transform="translate(21,98)"><path d="M0 17L15 0H7V-17H-7V0H-15Z"/></g>
              <g transform="translate(61,98)"><path d="M0 -17L4 -4L15 0L4 4L0 17L-4 4L-15 0L-4 -4Z"/></g>
              <g transform="translate(101,98)"><path d="M0 -17L4 -5H16L6 3L10 16L0 8L-10 16L-6 3L-16 -5H-4Z"/></g>
              <g transform="translate(141,98)"><path d="M0 -17L5 -9H15L10 0L15 9H5L0 17L-5 9H-15L-10 0L-15 -9H-5Z"/></g>
              <g transform="translate(181,98)"><path d="M-15 -15H15V8H-4L-10 17V8H-15Z"/></g>
              <g transform="translate(221,98)"><path d="M-8 9C-20 0 -12 -15 0 -15C14 -15 20 -2 10 7C6 10 0 10 -4 10L-12 17Z"/></g>
              <g transform="translate(261,98)"><path d="M-10 8C-18 6 -18 -4 -13 -6C-14 -13 -5 -16 0 -13C6 -16 14 -13 13 -6C18 -3 18 6 11 8C8 12 2 12 -2 10L-10 16Z"/></g>
            </svg>
            <div class="gal-side"><i class="g-up"></i><i class="g-dn"></i><i class="g-more"></i></div>
          </div>
          <div class="rows rows-ol">
            <div class="row off"><svg width="32" height="32" viewBox="0 0 32 32"><path d="M1 8H20M1 8V31H22V18" fill="none" stroke="#b9c4d4" stroke-width="1.4"/><path d="M6 27L10 17L24 2L30 6L15 22Z" fill="#e6edf6" stroke="#9fadc2"/></svg><span>Outline</span><i class="caret caret-in caret-off"></i></div>
            <div class="row off"><svg width="32" height="34" viewBox="0 0 32 34"><path d="M16 1L28 15L18 25H13L4 15Z" fill="#eef3f9" stroke="#9fadc2"/><rect y="22" width="32" height="12" fill="#b9c9dd"/></svg><span>Fill</span><i class="caret caret-in caret-off"></i></div>
          </div>
        </div>
        <div class="grp-label">Shapes</div>
      </div>
      <div class="grp g-size">
        <div class="big big-size">
          <div class="big-ico">
            <div class="sizes"><i class="s1"></i><i class="s2"></i><i class="s3"></i><i class="s4"></i><i class="s5"></i><i class="s6"></i></div>
          </div>
          <div class="big-label">Size</div>
          <div class="caret"></div>
        </div>
      </div>
      <div class="grp g-colors">
        <div class="grp-body">
          <div class="hl-btn hl-color">
            <div class="c1-wrap"><div class="c1-swatch"></div></div>
            <div class="big-label">Color<br>1</div>
          </div>
          <div class="big big-c2">
            <div class="big-ico"><div class="c2-swatch"></div></div>
            <div class="big-label">Color<br>2</div>
          </div>
          <div class="palette">
            <i class="c01"></i><i class="c02"></i><i class="c03"></i><i class="c04"></i><i class="c05"></i><i class="c06"></i><i class="c07"></i><i class="c08"></i><i class="c09"></i><i class="c10"></i>
            <i class="c11"></i><i class="c12"></i><i class="c13"></i><i class="c14"></i><i class="c15"></i><i class="c16"></i><i class="c17"></i><i class="c18"></i><i class="c19"></i><i class="c20"></i>
            <i></i><i></i><i></i><i></i><i></i><i></i><i></i><i></i><i></i><i></i>
          </div>
          <div class="big big-edit">
            <div class="big-ico"><div class="rainbow"></div></div>
            <div class="big-label">Edit<br>colors</div>
          </div>
        </div>
        <div class="grp-label">Colors</div>
      </div>
    </div>
    <div class="p-work">
      <div class="p-canvas"></div>
      <div class="p-scroll"><i class="p-up"></i><div class="p-thumb"></div></div>
    </div>
  </section>
</div>
</body>
</html>
```
FILE: styles.css
```css
* { box-sizing: border-box; }
html, body { margin: 0; padding: 0; }
body { width: 2736px; height: 1824px; overflow: hidden; font-family: "Liberation Sans", Arial, sans-serif; background: #eee; color: #212121; }
.defs { position: absolute; }
.screen { position: relative; width: 2736px; height: 1824px; display: flex; flex-direction: column; overflow: hidden; }
svg { display: block; flex: none; }

/* browser chrome */
.chrome { height: 178px; flex: none; background: #f2f2f2; font-family: "Open Sans", sans-serif; }
.tabstrip { height: 57px; background: #fff; border-bottom: 1px solid #a8a8a8; display: flex; padding-left: 10px; }
.tab { position: relative; width: 199px; height: 57px; margin-right: -25px; flex: none; background: #a9a9a9; clip-path: polygon(0 100%, 16px 0, 178px 0, 199px 100%); display: flex; align-items: center; padding: 0 0 1px 34px; font-size: 22px; letter-spacing: -.4px; color: #444; }
.tab::before { content: ""; position: absolute; inset: 1px 1px 0 1px; background: #d9d9d9; clip-path: polygon(0 100%, 16px 0, 176px 0, 197px 100%); }
.tab > * { position: relative; }
.tab:nth-child(1) { z-index: 13; } .tab:nth-child(2) { z-index: 12; } .tab:nth-child(3) { z-index: 11; } .tab:nth-child(4) { z-index: 10; }
.tab:nth-child(5) { z-index: 9; } .tab:nth-child(6) { z-index: 8; } .tab:nth-child(7) { z-index: 7; } .tab:nth-child(8) { z-index: 6; }
.tab:nth-child(9) { z-index: 5; } .tab:nth-child(10) { z-index: 4; } .tab:nth-child(11) { z-index: 3; } .tab:nth-child(13) { z-index: 1; }
.tab.tab-on { z-index: 20; }
.tab-on::before { background: #f2f2f2; }
.tab-on { color: #111; }
.fav { width: 32px; height: 32px; }
.gh-dark { color: #444; }
.tab-t { width: 65px; margin-left: 11px; white-space: nowrap; -webkit-mask-image: linear-gradient(to right, #000 66%, transparent 96%); mask-image: linear-gradient(to right, #000 66%, transparent 96%); }
.tab-x { width: 14px; height: 14px; margin-left: 7px; }
.tab-x path { stroke: #555; stroke-width: 1.7; fill: none; }
.newtab { width: 68px; height: 32px; margin: 14px 0 0 23px; background: #d9d9d9; clip-path: polygon(0 0, 56px 0, 68px 100%, 12px 100%); }
.profile { width: 48px; height: 37px; margin-left: 33px; background: #b0b0b0; display: flex; align-items: center; justify-content: center; }
.wctl { width: 92px; height: 54px; display: flex; align-items: center; justify-content: center; }
.profile + .wctl { margin-left: 13px; }
.toolbar { height: 65px; display: flex; align-items: flex-start; padding: 9px 0 0 7px; }
.nav { width: 57px; height: 53px; display: flex; align-items: center; justify-content: center; }
.omni { width: 1901px; height: 53px; margin-left: 7px; background: #fff; border: 1px solid #b5b5b5; border-top-width: 2px; border-radius: 3px; display: flex; align-items: center; padding: 0 15px 0 19px; }
.url { margin-left: 20px; font-size: 26.6px; white-space: nowrap; flex: 1; }
.u-sec { color: #0b8043; } .u-rest { color: #767676; } .u-host { color: #111; }
.ext { width: 64px; height: 52px; margin-left: 0; }
.omni + .ext { margin-left: 6px; }
.ext svg { width: 64px; height: 52px; overflow: visible; }
.bookmarks { height: 56px; display: flex; align-items: center; padding: 0 0 2px 22px; font-size: 22.5px; color: #222; border-bottom: 1px solid #ccc; }
.bm { display: flex; align-items: center; gap: 11px; margin-right: 26px; }
.bi { width: 31px; height: 32px; }
.bi-g { width: 30px; }
.bm-t { width: 232px; white-space: nowrap; -webkit-mask-image: linear-gradient(to right, #000 88%, transparent 99%); mask-image: linear-gradient(to right, #000 88%, transparent 99%); }
.bm-apps { gap: 14px; margin-right: 26px; }
.bm-sos { margin-right: 14px; }
.bm-sci { background: #ddd; height: 48px; padding: 0 12px; gap: 10px; margin-right: 12px; width: 146px; }
.bm-yt .bm-t { width: 225px; }
.bm-yt { margin-right: 31px; }
.bm-yt2 { margin-right: 35px; }
.bm-yt2 .bm-t { width: 226px; margin-left: 1px; font-family: "Open Sans", "Noto Sans CJK JP", sans-serif; }
.bm-gg { gap: 8px; margin-right: 0; }
.bm-gg .bm-t { width: 234px; }
.bm-more { margin-left: auto; margin-right: 45px; font-size: 26px; color: #444; }
.svg-g { font: 38px "Liberation Serif", serif; fill: #7a5a2a; text-anchor: middle; }
.svg-h { font: italic 26px "Liberation Serif", serif; fill: #bbb; text-anchor: middle; }
.svg-css { font: bold 13px "Liberation Sans", sans-serif; fill: #fff; text-anchor: middle; }
.svg-badge { font: 17px "Open Sans", sans-serif; fill: #fff; text-anchor: middle; }
.svg-thai { font: bold 30px "DejaVu Sans", "Noto Sans", sans-serif; fill: #000; text-anchor: middle; }
.svg-a { font: bold 24px "Liberation Sans", sans-serif; fill: #a82a22; text-anchor: middle; }
.svg-sos { font: bold 14px "Liberation Sans", sans-serif; fill: #fff; text-anchor: middle; transform: scaleY(1.55); transform-origin: 16px 0; }
.svg-64 { font: 10px "Liberation Sans", sans-serif; fill: #222; }

/* page */
.viewport { height: 1566px; flex: none; display: flex; overflow: hidden; }
.page { width: 2704px; background: #eee; padding-left: 407px; padding-right: 409px; }
.card { background: #fff; box-shadow: 0 2px 3px rgba(0,0,0,.45); }
.card-actions { padding-top: 32px; height: 130px; }
.actions { height: 98px; background: #f4f4f4; display: flex; align-items: center; padding-left: 151px; font-size: 32.7px; color: #212121; }
.act { display: flex; align-items: center; gap: 12px; }
.act span { white-space: nowrap; }
.act-abandon { margin-left: 394px; gap: 15px; }
.act-submit { margin-left: 87px; gap: 16px; }
.card-task { margin-top: 16px; }
.task-head { height: 116px; border-bottom: 3px solid #bdbdbd; display: flex; align-items: center; justify-content: space-between; padding: 0 44px 0 33px; }
.h-title { margin: 0; font-weight: 400; color: #212121; white-space: nowrap; }
.h-task { font-size: 38.5px; }
.task-gap { height: 64px; }
.task-foot { height: 98px; background: #f4f4f4; }
.columns { margin-top: 34px; display: flex; height: 900px; }
.col-left { width: 642px; background: #fff; padding: 23px 0 0 33px; box-shadow: 0 1px 3px rgba(0,0,0,.35); white-space: nowrap; }
.h-say { font-size: 40.5px; line-height: 56px; }
.para { margin: 31px 0 0; font-size: 32.6px; line-height: 51px; color: #212121; }
.para-1 { margin-top: 35px; }
.para-1 + .para { margin-top: 31px; }
.col-right { width: 1215px; margin-left: 31px; background: #fff; box-shadow: 0 1px 3px rgba(0,0,0,.35); }
.panel { height: 686px; background: #f4f4f4; padding-top: 30px; display: flex; flex-direction: column; align-items: flex-end; }
.note { margin: 0; font-style: italic; font-size: 29.7px; line-height: 45px; white-space: nowrap; }
.note-a { padding-right: 123px; }
.note-b { padding-right: 45px; }
.typed { margin: 197px 0 0; padding-right: 78px; font-size: 32px; line-height: 50px; white-space: nowrap; }
.spell { text-decoration: underline wavy #e33 1px; text-underline-offset: 3px; }
.rule { width: 400px; height: 2px; margin: 50px 37px 0 0; background: #d8d8d8; }
.counter { margin: 10px 41px 0 0; font-size: 24px; line-height: 30px; }
.send-row { width: 100%; margin-top: 108px; display: flex; align-items: center; justify-content: space-between; padding: 0 48px 0 56px; }
.attach { display: flex; align-items: center; gap: 12px; font-size: 31.5px; padding-top: 4px; }
.send { width: 175px; height: 74px; background: #ff8f00; color: #fff; font-size: 32px; border-radius: 4px; display: flex; align-items: center; justify-content: center; box-shadow: 0 3px 6px rgba(0,0,0,.3); }
.scroll { width: 32px; background: #f1f1f1; display: flex; flex-direction: column; align-items: center; }
.arrow-up { width: 0; height: 0; margin-top: 15px; border: 7px solid transparent; border-top: 0; border-bottom: 9px solid #505050; }
.thumb { width: 32px; height: 617px; margin-top: 376px; background: #c0c0c0; }
.arrow-down { width: 0; height: 0; margin-top: auto; margin-bottom: 12px; border: 7px solid transparent; border-bottom: 0; border-top: 9px solid #505050; }

/* taskbar */
.taskbar { height: 80px; flex: none; display: flex; background: linear-gradient(to right, #000 175px, #272727 175px, #272727 1822px, #1e1f21 1822px, #1e1f21 2338px, #000 2338px); color: #fff; font-family: "Open Sans", sans-serif; }
.tb { width: 98px; height: 80px; display: flex; align-items: center; justify-content: center; padding-bottom: 2px; background-repeat: no-repeat; }
.tb-start { width: 96px; }
.tb:nth-child(2) { width: 98px; }
.tb:nth-child(3) { width: 99px; }
.tb-open { background-image: linear-gradient(#76b9ed, #76b9ed); background-size: 80px 4px; background-position: center bottom; }
.tb-stack { background-image: linear-gradient(#76b9ed, #76b9ed), linear-gradient(#5d93c0, #5d93c0); background-size: 63px 4px, 80px 4px; background-position: 9px bottom, 9px bottom; }
.tb-paint { background: #555 linear-gradient(#76b9ed, #76b9ed) no-repeat center bottom / 96px 4px; width: 96px; margin-left: 1px; }
.tray { margin-left: auto; display: flex; height: 80px; padding-right: 32px; }
.tr { display: flex; align-items: center; justify-content: center; height: 80px; }
.tr-1 { width: 66px; } .tr-2 { width: 63px; } .tr-3 { width: 63px; } .tr-4 { width: 67px; } .tr-5 { width: 66px; } .tr-6 { width: 74px; } .tr-7 { width: 86px; }
.tr-8 { width: 66px; font-size: 22px; }
.tr-9 { width: 142px; flex-direction: column; font-size: 22px; line-height: 37px; }
.tr-10 { width: 70px; }
.svg-chat { font: bold 15px "Liberation Sans", sans-serif; fill: #ddd; text-anchor: middle; }
.svg-pc { font: bold 19px "Liberation Sans", sans-serif; fill: #fff; }
.svg-notif { font: bold 21px "Open Sans", sans-serif; fill: #fff; text-anchor: middle; }
.gh-purple { color: #6e4fa8; }

/* VirtualBox window */
.vm { position: absolute; left: 627px; top: 328px; width: 1316px; height: 911px; background: #fff; border: 2px solid #ababab; border-top-color: #9a9a9a; box-shadow: 0 0 12px rgba(0,0,0,.3); display: flex; flex-direction: column; font-family: "Open Sans", sans-serif; }
.vm-title { height: 56px; flex: none; display: flex; align-items: center; padding-left: 14px; }
.vm-name { margin-left: 3px; font-size: 23.4px; color: #808080; white-space: nowrap; }
.vm-ctl { margin-left: auto; display: flex; gap: 70px; padding-right: 37px; }
.sugar-row { display: flex; flex: none; background: #282828; padding-left: 70px; }
.sugar-top { height: 63px; border-bottom: 3px solid #808080; }
.sugar-bottom { height: 56px; border-bottom: 2px solid #555; }
.slot { width: 68px; height: 60px; }
.slot-on { height: 63px; border: 2px solid #808080; border-bottom: 0; background: #282828; position: relative; z-index: 1; }
.slot-end { margin-left: auto; margin-right: 69px; }
.slot2 { width: 68px; height: 54px; position: relative; }
.slot2-on::before { content: ""; position: absolute; left: 5px; top: 0; width: 58px; height: 51px; background: #808080; border-radius: 6px; }
.vm-canvas { flex: 1; position: relative; background: #fff; }
.scribble { position: absolute; left: 37px; top: -21px; }
.over-here { position: absolute; left: 120px; top: 145px; font: 23px "DejaVu Sans", sans-serif; color: #ed1c24; white-space: nowrap; }
.cursor { position: absolute; left: 585px; top: 311px; }
.blob { position: absolute; right: 0; bottom: 0; width: 63px; height: 88px; border-radius: 50px 0 0 50px / 44px 0 0 44px; background: #b05000; }
.blob::after { content: ""; position: absolute; right: 0; top: 44px; width: 12px; height: 2px; background: #e0b080; }
.vm-bar { height: 11px; flex: none; background: #8f962c; position: relative; }

.tooltip { position: absolute; left: 1967px; top: 890px; width: 542px; height: 37px; background: #fff; border: 1px solid #666; box-shadow: 3px 3px 3px rgba(0,0,0,.35); font: 22.8px/35px "Open Sans", sans-serif; color: #555; padding-left: 6px; white-space: nowrap; }

/* Paint window */
.paint { position: absolute; left: 173px; top: 1372px; width: 2166px; height: 372px; background: #fff; border: 2px solid #1a7fd6; border-bottom: 0; display: flex; flex-direction: column; font-family: "Open Sans", sans-serif; color: #3a3a3a; box-shadow: 0 0 10px rgba(0,0,0,.25); }
.p-title { height: 56px; flex: none; display: flex; align-items: center; gap: 18px; padding-left: 9px; }
.p-logo { margin-right: -8px; }
.p-sep { width: 2px; height: 28px; background: #aaa; }
.p-save { margin-left: 3px; margin-right: -1px; }
.p-sep2 { margin-left: 2px; margin-right: -7px; }
.p-qa { margin-left: -2px; }
.p-name { font-size: 23px; color: #111; white-space: nowrap; }
.p-ctl { margin-left: auto; display: flex; gap: 70px; padding-right: 36px; }
.p-tabs { height: 48px; flex: none; display: flex; align-items: stretch; border-bottom: 2px solid #dcdcdc; font-size: 19.5px; }
.p-file { width: 112px; margin-bottom: -1px; background: #1979ca; color: #fff; display: flex; align-items: center; justify-content: center; }
.p-home { width: 110px; margin-bottom: -2px; background: #fff; border: 2px solid #dcdcdc; border-bottom: 0; border-left: 0; display: flex; align-items: center; justify-content: center; }
.p-view { margin-left: 29px; display: flex; align-items: center; }
.p-collapse { margin: 18px 0 0 auto; }
.p-help { width: 26px; height: 26px; margin: 8px 12px 0 14px; border-radius: 50%; background: #1979ca; color: #fff; font: bold 18px/26px "Open Sans", sans-serif; text-align: center; }
.ribbon { height: 194px; flex: none; background: #f5f6f7; border-bottom: 2px solid #dcdde0; padding-top: 6px; display: flex; font-size: 19.5px; }
.grp { height: 180px; flex: none; display: flex; flex-direction: column; border-right: 2px solid #e2e3e4; }
.grp-body { flex: 1; display: flex; min-height: 0; }
.grp-label { height: 26px; line-height: 26px; text-align: center; color: #555; font-size: 19px; flex: none; }
.g-clip { width: 207px; } .g-image { width: 231px; } .g-tools { width: 159px; } .g-brush { width: 104px; } .g-shapes { width: 478px; } .g-size { width: 103px; } .g-colors { width: 713px; }
.big { display: flex; flex-direction: column; align-items: center; flex: none; }
.big-ico { height: 82px; display: flex; align-items: center; justify-content: center; }
.big-label { line-height: 30px; text-align: center; white-space: nowrap; }
.caret { width: 0; height: 0; margin-top: 8px; border: 5px solid transparent; border-top: 7px solid #111; border-bottom: 0; }
.caret-in { margin: 0 0 6px 6px; }
.rows-ol .caret-in { margin-left: 0; }
.caret-off { border-top-color: #777; }
.big-paste { width: 106px; }
.big-select { width: 98px; }
.marquee { width: 56px; height: 44px; border: 2px dotted #1e5a9a; background: #fff; }
.rows { display: flex; flex-direction: column; padding-top: 5px; }
.row { height: 44px; display: flex; align-items: center; gap: 7px; white-space: nowrap; }
.row svg { width: 30px; }
.off { color: #999; }
.tools { display: grid; grid-template-columns: 44px 44px 50px; grid-auto-rows: 60px; padding: 11px 0 0 10px; justify-items: center; align-items: center; }
.svg-pa { font: bold 42px "Liberation Serif", serif; fill: #1f3a5f; text-anchor: middle; }
.hl-btn { width: 84px; height: 135px; margin: 4px 0 0 6px; background: #c9e0f7; border: 1px solid #7fb0e8; display: flex; flex-direction: column; align-items: center; flex: none; }
.hl-top { width: 100%; height: 74px; background: #dcebfa; border-bottom: 1px solid #7fb0e8; display: flex; justify-content: center; padding-top: 5px; margin-bottom: 2px; }
.gallery { width: 313px; height: 119px; margin: 9px 0 0 9px; background: #f9fbfd; border: 2px solid #e0e2e5; display: flex; flex: none; }
.shapes { fill: #eaf4fb; stroke: #2c6aa8; stroke-width: 1.5; }
.shapes .ns { fill: none; }
.gal-side { flex: 1; border-left: 2px solid #eceef1; background: #f4f5f7; display: flex; flex-direction: column; align-items: center; justify-content: space-around; padding: 4px 0; }
.g-up { width: 0; height: 0; border: 5px solid transparent; border-top: 0; border-bottom: 8px solid #b9c0c9; }
.g-dn { width: 0; height: 0; border: 5px solid transparent; border-bottom: 0; border-top: 8px solid #555; }
.g-more { width: 12px; height: 10px; border-top: 2px solid #555; background: linear-gradient(#555, #555) no-repeat center 3px / 10px 5px; }
.rows-ol { margin-left: 12px; }
.rows-ol .row { gap: 9px; }
.big-size { width: 100px; }
.sizes { width: 64px; display: flex; flex-direction: column; margin-top: -3px; }
.sizes i { display: block; background: #1f3a5f; }
.s1 { height: 2px; } .s2 { height: 3px; margin-top: 4px; } .s3 { height: 5px; margin-top: 5px; } .s4 { height: 7px; margin-top: 4px; } .s5 { height: 9px; margin-top: 5px; } .s6 { height: 13px; margin-top: 6px; }
.hl-color { margin-left: 7px; }
.c1-wrap { height: 78px; display: flex; align-items: flex-start; padding-top: 5px; }
.c1-swatch { width: 64px; height: 63px; background: #000; border: 4px solid #b5c0cc; outline: 1px solid #666; }
.big-c2 { width: 85px; }
.c2-swatch { width: 48px; height: 48px; background: #fff; border: 2px solid #aaa; box-shadow: inset 0 0 4px #bbb; }
.palette { width: 440px; margin-top: 5px; display: grid; grid-template-columns: repeat(10, 42px); grid-auto-rows: 42px; gap: 2px; flex: none; height: 130px; }
.palette i { display: block; border: 2px solid #b2b2b2; background: #f5f6f7; }
.palette i[class] { box-shadow: inset 0 0 0 1px #fff; border-color: #999; }
.c01 { background: #000 !important; } .c02 { background: #7f7f7f !important; } .c03 { background: #880015 !important; } .c04 { background: #ed1c24 !important; } .c05 { background: #ff7f27 !important; }
.c06 { background: #fff200 !important; } .c07 { background: #22b14c !important; } .c08 { background: #00a2e8 !important; } .c09 { background: #3f48cc !important; } .c10 { background: #a349a4 !important; }
.c11 { background: #fff !important; } .c12 { background: #c3c3c3 !important; } .c13 { background: #b97a57 !important; } .c14 { background: #ffaec9 !important; } .c15 { background: #ffc90e !important; }
.c16 { background: #efe4b0 !important; } .c17 { background: #b5e61d !important; } .c18 { background: #99d9ea !important; } .c19 { background: #7092be !important; } .c20 { background: #c8bfe7 !important; }
.big-edit { width: 86px; }
.rainbow { width: 58px; height: 58px; border: 2px solid #ccc; background: linear-gradient(to bottom, transparent, #999), linear-gradient(to right, #f00, #ff0, #0f0, #0ff, #00f, #f0f, #f00); }
.p-work { flex: 1; background: #c7d0e0; display: flex; justify-content: space-between; min-height: 0; }
.p-canvas { width: 1642px; margin: 5px 0 0 4px; background: #fff; box-shadow: 3px 9px 3px -3px #aab4c8; }
.p-scroll { width: 33px; background: #fff; display: flex; flex-direction: column; align-items: center; }
.p-up { width: 0; height: 0; margin-top: 13px; border: 6px solid transparent; border-top: 0; border-bottom: 9px solid #555; }
.p-thumb { width: 100%; flex: 1; margin-top: 12px; background: #ccc; }
```
